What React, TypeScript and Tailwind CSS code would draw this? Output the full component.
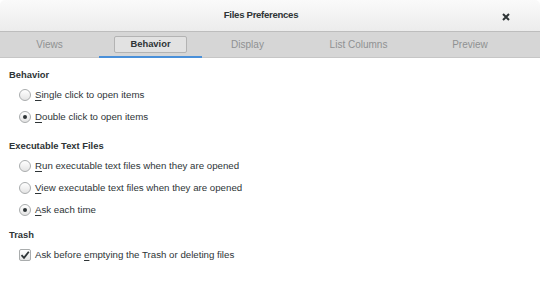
import React from 'react';

const font = { fontFamily: '"Liberation Sans", Arial, sans-serif' };

const tabs = [
  { label: 'Views', w: 'w-[99px]' },
  { label: 'Behavior', w: 'w-[103px]', active: true },
  { label: 'Display', w: 'w-[91px]' },
  { label: 'List Columns', w: 'w-[131px]' },
  { label: 'Preview', w: 'w-[92px]' },
];

const Radio = ({ checked }: { checked?: boolean }) => (
  <span className="w-[12px] h-[12px] rounded-full border border-[#a9acad] bg-gradient-to-b from-[#ffffff] to-[#e4e4e4] flex items-center justify-center shrink-0">
    {checked && <span className="w-[4px] h-[4px] rounded-full bg-[#2e3436]" />}
  </span>
);

const Check = () => (
  <span className="w-[12px] h-[12px] rounded-[2px] border border-[#a9acad] bg-gradient-to-b from-[#ffffff] to-[#e4e4e4] flex items-center justify-center shrink-0">
    <svg width="10" height="10" viewBox="0 0 10 10">
      <path d="M1.5 5.2 L4 7.8 L8.8 1.8" fill="none" stroke="#2e3436" strokeWidth="1.8" />
    </svg>
  </span>
);

const Row = ({ children, checked, box }: { children: React.ReactNode; checked?: boolean; box?: boolean }) => (
  <div className="h-[22px] flex items-center pl-[19px] gap-[4px]">
    {box ? <Check /> : <Radio checked={checked} />}
    <span className="text-[9.7px] text-[#2e3436]">{children}</span>
  </div>
);

const Heading = ({ children, className = '' }: { children: React.ReactNode; className?: string }) => (
  <div className={`h-[18px] flex items-center pl-[9px] text-[9.4px] font-bold text-[#2e3436] ${className}`}>{children}</div>
);

const U = ({ children }: { children: React.ReactNode }) => (
  <span className="underline underline-offset-[1.5px] decoration-[1px]">{children}</span>
);

export default function App() {
  return (
    <div style={font} className="w-[540px] h-[301px] bg-white overflow-hidden flex flex-col">
      <div className="h-[32px] shrink-0 relative flex items-center justify-center pr-[18px] bg-gradient-to-b from-[#fafafa] to-[#ececec] border-b border-[#bdbdbd] rounded-t-[5px]">
        <span className="text-[9.6px] font-bold tracking-[-0.3px] text-[#2e3436]">Files Preferences</span>
        <svg className="absolute right-[30px] top-[13px]" width="8" height="8" viewBox="0 0 8 8">
          <path d="M1 1 L7 7 M7 1 L1 7" stroke="#2e3436" strokeWidth="2" />
        </svg>
      </div>
      <div className="h-[26px] shrink-0 flex bg-[#d6d6d6] border-b border-[#c6c6c6]">
        {tabs.map((t) => (
          <div key={t.label} className={`${t.w} h-full flex items-center justify-center relative`}>
            {t.active ? (
              <>
                <span className="h-[17px] w-[73px] flex items-center justify-center border border-[#b3b3b3] bg-[#e2e2e2] rounded-[2px] text-[9.4px] font-bold text-[#2e3436]">
                  {t.label}
                </span>
                <span className="absolute left-0 right-0 bottom-[-1px] h-[2px] bg-[#4a90d9]" />
              </>
            ) : (
              <span className="text-[10px] text-[#8f9192]">{t.label}</span>
            )}
          </div>
        ))}
      </div>
      <div className="pt-[8px] flex flex-col">
        <Heading>Behavior</Heading>
        <Row>
          <U>S</U>ingle click to open items
        </Row>
        <Row checked>
          <U>D</U>ouble click to open items
        </Row>
        <Heading className="mt-[9px]">Executable Text Files</Heading>
        <Row>
          <U>R</U>un executable text files when they are opened
        </Row>
        <Row>
          <U>V</U>iew executable text files when they are opened
        </Row>
        <Row checked>
          <U>A</U>sk each time
        </Row>
        <Heading className="mt-[5px]">Trash</Heading>
        <Row box>
          Ask before <U>e</U>mptying the Trash or deleting files
        </Row>
      </div>
    </div>
  );
}
